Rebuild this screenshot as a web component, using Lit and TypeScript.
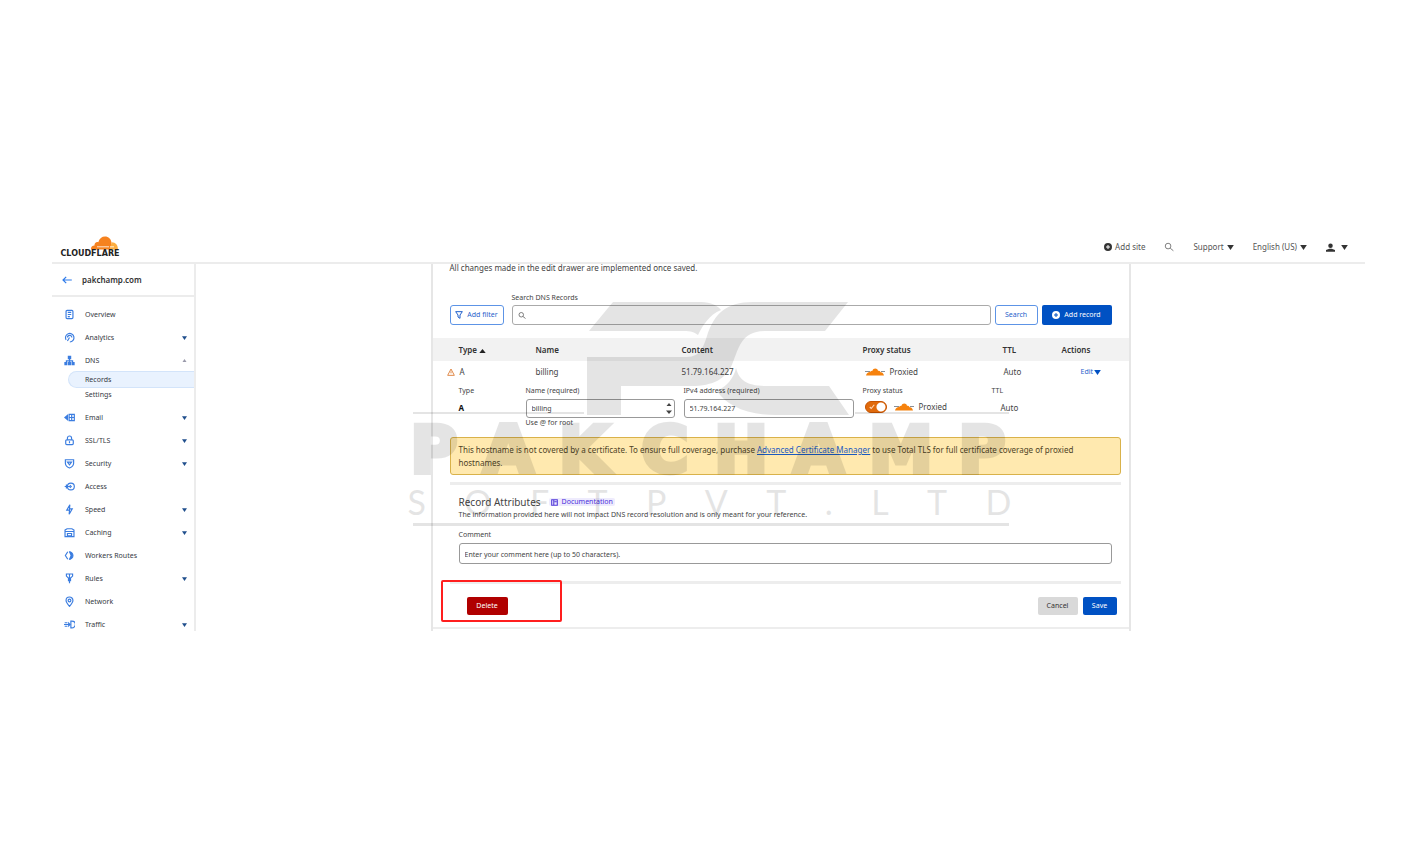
import { LitElement, html, css, svg, nothing } from "lit";
import { customElement } from "lit/decorators.js";
import { classMap } from "lit/directives/class-map.js";

const glyphs: Record<string, unknown> = {
  overview: svg`<rect x="3" y="2" width="10" height="12" rx="1.5"/><path d="M5.5 5h5M5.5 8h5M5.5 11h3"/>`,
  analytics: svg`<path d="M3 11.500a6.200 6.200 0 1 1 5.500 3M5 8a3.200 3.200 0 0 1 6.400 0M8 8l-3 5"/>`,
  dns: svg`<path d="M8 5v5M3.500 11V8.500h9V11"/><path class="solid" d="M5.500 1h5v5h-5zM0.500 10h4.500v5H0.500zM5.800 10h4.500v5H5.800zM11 10h4.500v5H11z"/>`,
  email: svg`<path class="solid" d="M0 8l6-5v10z"/><path d="M7.500 3.500h7.500v9H7.500zM7.500 8h7.500M11.200 3.500v9"/>`,
  lock: svg`<path d="M5 7V4.500a3 3 0 0 1 6 0V7"/><rect x="2.500" y="7" width="11" height="7" rx="1.500"/><path d="M8 9v3"/>`,
  shield: svg`<path d="M2 2.500h12v5c0 3-2.500 5.500-6 7-3.500-1.500-6-4-6-7zM5 6h6L8 10z"/>`,
  access: svg`<circle cx="10" cy="8" r="5"/><path d="M1 8h8M3.500 5v6M8.500 6l2 2-2 2"/>`,
  speed: svg`<path d="M8.500 1L4 9h4l-.5 6L12 7H8z"/>`,
  caching: svg`<path d="M1.500 4.500l3-2h7l3 2V14h-13zM1.500 6.500h13M5 9.500h6V13H5z"/>`,
  workers: svg`<path d="M5.500 2.500L2 8l3.500 5.500"/><path class="solid" d="M7 2a6 6 0 0 1 0 12l2.500-6z"/><path d="M7.500 2.500a5.500 5.500 0 0 1 0 11"/>`,
  rules: svg`<path d="M3.500 1.500h9v3L9 8H7L3.500 4.500zM8 2v13M6.500 8v3h3V8"/>`,
  network: svg`<path d="M8 15C5 11.500 3 9 3 6.500a5 5 0 0 1 10 0C13 9 11 11.500 8 15z"/><circle cx="8" cy="6.500" r="2"/>`,
  traffic: svg`<path d="M0 8h9M1 5.500h4M1 10.500h4"/><path class="solid" d="M6 4l4 4-4 4z"/><path d="M10 3h1.500a5 5 0 0 1 0 10H10z"/>`,
};

interface NavItem {
  label: string;
  icon: string;
  caret?: "down" | "open";
  children?: string[];
}

const nav: NavItem[] = [
  { label: "Overview", icon: "overview" },
  { label: "Analytics", icon: "analytics", caret: "down" },
  { label: "DNS", icon: "dns", caret: "open", children: ["Records", "Settings"] },
  { label: "Email", icon: "email", caret: "down" },
  { label: "SSL/TLS", icon: "lock", caret: "down" },
  { label: "Security", icon: "shield", caret: "down" },
  { label: "Access", icon: "access" },
  { label: "Speed", icon: "speed", caret: "down" },
  { label: "Caching", icon: "caching", caret: "down" },
  { label: "Workers Routes", icon: "workers" },
  { label: "Rules", icon: "rules", caret: "down" },
  { label: "Network", icon: "network" },
  { label: "Traffic", icon: "traffic", caret: "down" },
];

const caret = html`<svg class="caret" viewBox="0 0 8 6" aria-hidden="true"><path d="M0 0h8L4 6z" /></svg>`;
const magnifier = html`<svg class="glyph" viewBox="0 0 16 16" aria-hidden="true">
  <circle cx="6.500" cy="6.500" r="4.500" /><path d="M10 10l5 4" />
</svg>`;
const plusDisc = html`<svg class="disc" viewBox="0 0 16 16" aria-hidden="true">
  <path fill-rule="evenodd" d="M8 0a8 8 0 1 1 0 16A8 8 0 0 1 8 0zM7 4v3H4v2h3v3h2V9h3V7H9V4z" />
</svg>`;
const proxyCloud = html`<svg class="cloud" viewBox="0 0 20 8" aria-hidden="true">
  <path d="M0 3.500h5M16 3.500h4" stroke="#8a8f96" stroke-width="1" />
  <path d="M1 7.500c.5-2 2-3.500 4-3.500C6 3 6.800 2.800 7.500 2.800 8 -.4 12.500-.4 13 2.800c1.500 0 2.200.4 2.500 1.500 2-.2 3 1.300 3.500 3.200z" fill="#f6820d" />
</svg>`;

@customElement("site-header")
export class SiteHeader extends LitElement {
  static styles = css`
    :host { display: flex; align-items: center; box-sizing: border-box; height: 36px; padding: 4px 17px 0 8px; border-bottom: 2px solid #ececec; font-size: 8px; color: #555; }
    .logo { width: 60px; height: 22px; text-decoration: none; color: #222; display: flex; flex-direction: column; align-items: center; }
    .logo svg { width: 30px; height: 14px; margin-left: 28px; flex: none; }
    .word { font: 700 8px/8px "DejaVu Sans", sans-serif; }
    .tools { margin-left: auto; display: flex; align-items: center; gap: 19px; }
    button { all: unset; display: flex; align-items: center; gap: 3px; font-size: 8px; line-height: 10px; cursor: pointer; }
    .caret { width: 7px; height: 5px; fill: #333; }
    .disc { width: 8px; height: 8px; fill: #333; }
    .glyph { width: 10px; height: 10px; fill: none; stroke: #777; stroke-width: 1.5; }
    .person { width: 9px; height: 9px; fill: #333; margin-right: 3px; }
  `;
  render() {
    return html`
      <a class="logo" href="#" aria-label="Cloudflare home">
        <svg viewBox="0 0 30 14" aria-hidden="true">
          <path d="M2 13.500c-.3-2.600 1.300-4 3.500-4C5.300 7 7.500 5.500 9.300 6.300 10.300 2.500 13 .5 16 .5c3.600 0 6 2.500 6.500 6l-1 7z" fill="#f6821f" />
          <path d="M20.500 13.500l2.200-7.200c4 0 6.300 3 6.200 7.200z" fill="#fbad41" />
          <path d="M8 10.800h12M21 10.800h4" stroke="#fff" stroke-width=".8" />
        </svg>
        <span class="word">CLOUDFLARE</span>
      </a>
      <div class="tools">
        <button>${plusDisc}Add site</button>
        <button aria-label="Search">${magnifier}</button>
        <button>Support ${caret}</button>
        <button>English (US) ${caret}</button>
        <button aria-label="Account">
          <svg class="person" viewBox="0 0 12 11" aria-hidden="true"><circle cx="6" cy="3" r="3" /><path d="M0 11V8.800l4.500-1.800h3L12 8.800V11z" /></svg>
          ${caret}
        </button>
      </div>
    `;
  }
}

@customElement("side-nav")
export class SideNav extends LitElement {
  static styles = css`
    :host { display: block; border-right: 2px solid #ececec; font-size: 7px; color: #36393f; }
    .site { display: flex; align-items: center; gap: 10px; height: 31px; padding: 0 10px; border-bottom: 2px solid #ececec; font-size: 8px; font-weight: 600; color: #333; }
    .site svg { width: 10px; height: 8px; fill: none; stroke: #2f7bea; stroke-width: 1.5; }
    ul { list-style: none; margin: 0; padding: 0; }
    .list { padding-top: 6px; }
    .item { display: flex; align-items: center; height: 23px; padding: 0 7px 0 12px; color: inherit; text-decoration: none; }
    .label { margin-left: 10px; flex: 1; }
    .icon { width: 11px; height: 11px; fill: none; stroke: #3b7de0; stroke-width: 1.7; }
    .solid { fill: #3b7de0; stroke: none; }
    .caret { width: 5px; height: 4px; fill: #1f4e8c; }
    .open { fill: #99a; height: 3px; }
    .sub { padding-bottom: 4px; }
    .child { display: block; margin-left: 17px; padding-left: 16px; line-height: 15px; color: inherit; text-decoration: none; border-radius: 8px 0 0 8px; }
    .current { background: #e9f2fe; box-shadow: 0 0 0 1px #d3e4fa; clip-path: inset(-1px 0 -1px -1px); }
  `;
  render() {
    return html`
      <div class="site">
        <svg viewBox="0 0 12 10" aria-hidden="true"><path d="M12 5H1M5 1L1 5l4 4" /></svg>
        <span>pakchamp.com</span>
      </div>
      <ul class="list">
        ${nav.map(
          (n) => html`<li>
            <a class="item" href="#">
              <svg class="icon" viewBox="0 0 16 16" aria-hidden="true">${glyphs[n.icon]}</svg>
              <span class="label">${n.label}</span>
              ${n.caret
                ? html`<svg class=${classMap({ caret: true, open: n.caret === "open" })} viewBox="0 0 8 6" aria-hidden="true"><path d=${n.caret === "open" ? "M0 6h8L4 0z" : "M0 0h8L4 6z"} /></svg>`
                : nothing}
            </a>
            ${n.children
              ? html`<ul class="sub">
                  ${n.children.map((c, i) => html`<li><a class=${classMap({ child: true, current: i === 0 })} href="#">${c}</a></li>`)}
                </ul>`
              : nothing}
          </li>`
        )}
      </ul>
    `;
  }
}

@customElement("brand-watermark")
export class BrandWatermark extends LitElement {
  static styles = css`
    :host { display: block; position: absolute; left: -25px; top: 38px; width: 604px; pointer-events: none; color: #000; opacity: 0.1; }
    .mark { display: block; width: 604px; height: 113px; }
    .name { display: grid; grid-template-columns: 198px 364px; justify-content: space-between; margin: 0 6px 0 3px; font: 700 64px/70px "DejaVu Sans", sans-serif; -webkit-text-stroke: 5px #000; }
    .spread { display: flex; justify-content: space-between; }
    .tag { font: 400 34px/34px Lato, "Open Sans", sans-serif; }
    .rule { height: 3px; margin: 4px 3px 0 5px; background: #000; }
  `;
  private letters(word: string) {
    return [...word].map((c) => html`<span>${c}</span>`);
  }
  render() {
    return html`
      <svg class="mark" viewBox="407 302 604 113" aria-hidden="true">
        <path d="M588 331L612 302H700C710 302 717 306 720 310C708 315 702 325 697 335C692 331 688 331 680 331Z" />
        <path d="M586 357H686C700 357 703 345 706 336C713 314 725 302 752 302H847L824 331H765C740 331 738 348 732 362C726 379 712 386 690 386H620V415H586Z" />
        <path d="M735 368C738 380 746 386 765 386H828L848 415H775C745 415 725 405 716 391C726 386 733 378 735 368Z" />
        <path d="M412 412H583V414H412ZM854 412H1008V414H854Z" />
      </svg>
      <div class="name">
        <div class="spread">${this.letters("PAK")}</div>
        <div class="spread">${this.letters("CHAMP")}</div>
      </div>
      <div class="spread tag">${this.letters("SOFTPVT.LTD")}</div>
      <div class="rule"></div>
    `;
  }
}

@customElement("dns-panel")
export class DnsPanel extends LitElement {
  static styles = css`
    :host { display: block; position: relative; box-sizing: border-box; border: 2px solid #e6e6e6; border-width: 0 2px; font-size: 8px; line-height: 10px; color: #444; background: #fff; }
    * { box-sizing: border-box; }
    p { margin: 0; }
    button { font: inherit; border: 0; border-radius: 2px; padding: 0; cursor: pointer; display: flex; align-items: center; justify-content: center; gap: 4px; }
    input { font: inherit; color: #444; border: 1px solid #999; border-radius: 3px; background: transparent; }
    .intro { padding: 0 17px; line-height: 8px; }
    .search { display: grid; grid-template-columns: 54px 1fr 43px 70px; column-gap: 4px; padding: 19px 17px 0; }
    .search-label { grid-column: 2; margin: 0 0 1px 4px; font-size: 7px; line-height: 13px; }
    .search button { height: 20px; font-size: 7px; }
    .filter { grid-column: 1; }
    .outline { background: #fff; color: #1f5fcb; border: 1px solid #5d94e6; border-radius: 3px; }
    .outline svg { width: 8px; height: 8px; fill: none; stroke: #1f5fcb; stroke-width: 1.5; }
    .primary { background: #0051c3; color: #fff; }
    .disc { width: 8px; height: 8px; fill: #fff; }
    .box { display: flex; align-items: center; margin-left: 4px; border: 1px solid #aaa; border-radius: 3px; padding-left: 5px; }
    .box input { border: 0; flex: 1; height: 18px; padding: 0 4px; outline: none; }
    .glyph { width: 8px; height: 9px; fill: none; stroke: #555; stroke-width: 1.5; }
    table { width: 100%; margin-top: 13px; border-collapse: collapse; table-layout: fixed; text-align: left; }
    th, td { padding: 0; font-weight: 400; }
    th { height: 23px; background: #f2f2f2; font-weight: 600; color: #333; }
    td { height: 21px; }
    .c-icon { width: 26px; } .c-type { width: 77px; } .c-name { width: 146px; } .c-content { width: 181px; }
    .c-proxy { width: 140px; } .c-ttl { width: 59px; }
    .up { width: 7px; height: 4px; fill: #222; }
    .warn { display: block; width: 8px; height: 8px; margin-left: 14px; fill: none; stroke: #e08a4a; stroke-width: 1.5; }
    .cloud { width: 20px; height: 8px; fill: none; flex: none; }
    .status { display: flex; align-items: center; gap: 5px; padding-left: 2px; }
    .inset { padding-left: 1px; }
    .edit { display: inline-flex; gap: 1px; align-items: center; color: #1f5fcb; font-size: 7px; padding-left: 19px; text-decoration: none; }
    .edit .caret { width: 7px; height: 5px; fill: #0051c3; }
    .form { display: grid; grid-template-columns: 67px 149px 179px 1fr 137px; padding: 4px 0 0 26px; }
    .form > div { display: flex; flex-direction: column; }
    .cap { font-size: 7px; line-height: 10px; margin-bottom: 3px; }
    .form input[type="text"] { height: 19px; width: 100%; padding: 0 5px; font-size: 7px; }
    .form .value { line-height: 17px; }
    .strong { color: #111; font-weight: 700; }
    .stepper { position: relative; }
    .stepper svg { position: absolute; right: 2px; top: 3px; width: 8px; height: 13px; fill: #444; }
    .ip, .proxy { margin-left: 9px; }
    .toggle-row { display: flex; align-items: center; gap: 7px; height: 15px; padding-left: 2px; }
    .toggle-row .status { padding: 0; }
    .toggle { appearance: none; width: 22px; height: 12px; margin: 0; border-radius: 6px; border: 1px solid #c75300; background: radial-gradient(circle at 15px 5px, #fff 4px, transparent 5px) #e06a0c; }
    .toggle-row label { position: relative; display: flex; }
    .toggle-row label svg { position: absolute; left: 4px; top: 3px; width: 6px; height: 6px; fill: none; stroke: #ffd9b8; stroke-width: 1.5; }
    .help { font-size: 7px; line-height: 10px; }
    .auto { padding-left: 9px; }
    .alert { margin: 9px 8px 0 17px; padding: 5px 8px; border: 1px solid #d9b24a; border-radius: 3px; background: #ffe9af; line-height: 13px; color: #4e4326; }
    .alert a { color: #1b5ac0; }
    .divider { height: 3px; margin: 7px 8px 0 17px; background: #ededed; }
    .attributes { padding: 11px 17px 0 26px; }
    .title { display: flex; align-items: center; gap: 8px; }
    h2 { margin: 0; font-size: 10px; line-height: 12px; font-weight: 400; }
    .doc { display: flex; align-items: center; gap: 4px; padding: 0 2px; font-size: 7px; line-height: 8px; font-weight: 400; color: #4a30dc; background: #eeebfd; text-decoration: none; border-radius: 2px; }
    .doc svg { width: 7px; height: 7px; fill: none; stroke: #5038d8; stroke-width: 1.5; }
    .note { font-size: 7px; line-height: 13px; }
    .comment-label { display: block; margin-top: 9px; font-size: 7px; line-height: 10px; }
    .comment { display: block; width: 100%; height: 21px; margin-top: 3px; padding: 0 5px; }
    .comment::placeholder { color: #444; font-size: 7px; opacity: 1; }
    .thin { margin-top: 17px; }
    .actions { display: flex; align-items: center; gap: 5px; height: 43px; padding: 0 12px 0 34px; }
    .actions button { height: 18px; font-size: 7px; }
    .delete { width: 41px; background: #b00000; color: #fff; margin-right: auto; }
    .cancel { width: 40px; background: #d9d9d9; color: #333; }
    .save { width: 34px; background: #0051c3; color: #fff; }
    .end { height: 4px; border-top: 2px solid #ededed; }
    .callout { position: absolute; left: 8px; bottom: 9px; width: 121px; height: 42px; border: 2px solid #ff1e1e; border-radius: 2px; pointer-events: none; }
  `;
  render() {
    return html`
      <p class="intro">All changes made in the edit drawer are implemented once saved.</p>
      <div class="search">
        <label class="search-label" for="q">Search DNS Records</label>
        <button class="outline filter"><svg viewBox="0 0 12 12" aria-hidden="true"><path d="M1 1h10L7.500 6v5L4.500 9V6z" /></svg>Add filter</button>
        <div class="box">${magnifier}<input id="q" type="text" /></div>
        <button class="outline">Search</button>
        <button class="primary">${plusDisc}Add record</button>
      </div>
      <table>
        <colgroup><col class="c-icon" /><col class="c-type" /><col class="c-name" /><col class="c-content" /><col class="c-proxy" /><col class="c-ttl" /><col /></colgroup>
        <thead>
          <tr><th></th><th>Type <svg class="up" viewBox="0 0 8 5" aria-hidden="true"><path d="M0 5h8L4 0z" /></svg></th><th>Name</th><th>Content</th><th>Proxy status</th><th>TTL</th><th>Actions</th></tr>
        </thead>
        <tbody>
          <tr>
            <td><svg class="warn" viewBox="0 0 12 12" aria-hidden="true"><path d="M6 1.500L11 11H1zM6 5v3" /></svg></td>
            <td class="inset">A</td><td>billing</td><td>51.79.164.227</td>
            <td><span class="status">${proxyCloud}Proxied</span></td>
            <td class="inset">Auto</td>
            <td><a class="edit" href="#">Edit${caret}</a></td>
          </tr>
        </tbody>
      </table>
      <div class="form">
        <div><span class="cap">Type</span><span class="value strong">A</span></div>
        <div>
          <label class="cap" for="name">Name (required)</label>
          <span class="stepper"><input id="name" type="text" value="billing" /><svg viewBox="0 0 8 13" aria-hidden="true"><path d="M1.500 4L4 1l2.500 3zM1 8.500h6L4 12z" /></svg></span>
          <span class="help">Use @ for root</span>
        </div>
        <div class="ip"><label class="cap" for="ip">IPv4 address (required)</label><input id="ip" type="text" value="51.79.164.227" /></div>
        <div class="proxy">
          <span class="cap">Proxy status</span>
          <div class="toggle-row">
            <label><input class="toggle" type="checkbox" checked aria-label="Proxied" /><svg viewBox="0 0 8 8" aria-hidden="true"><path d="M1 4l2 2 4-5" /></svg></label>
            <span class="status">${proxyCloud}Proxied</span>
          </div>
        </div>
        <div><span class="cap">TTL</span><span class="value auto">Auto</span></div>
      </div>
      <p class="alert">This hostname is not covered by a certificate. To ensure full coverage, purchase <a href="#">Advanced Certificate Manager</a> to use Total TLS for full certificate coverage of proxied hostnames.</p>
      <div class="divider"></div>
      <div class="attributes">
        <div class="title">
          <h2>Record Attributes</h2>
          <a class="doc" href="#"><svg viewBox="0 0 10 10" aria-hidden="true"><path d="M1 1h8v8H1zM4 1v8M5 4h3" /></svg>Documentation</a>
        </div>
        <p class="note">The information provided here will not impact DNS record resolution and is only meant for your reference.</p>
        <label class="comment-label" for="comment">Comment</label>
        <input class="comment" id="comment" type="text" placeholder="Enter your comment here (up to 50 characters)." />
      </div>
      <div class="divider thin"></div>
      <div class="actions">
        <button class="delete">Delete</button>
        <button class="cancel">Cancel</button>
        <button class="save">Save</button>
      </div>
      <div class="end"></div>
      <div class="callout"></div>
      <brand-watermark></brand-watermark>
    `;
  }
}

@customElement("app-root")
export class AppRoot extends LitElement {
  static styles = css`
    :host { display: block; box-sizing: border-box; min-height: 100vh; padding: 228px 54px 0 52px; background: #fff; font-family: "Noto Sans", "Open Sans", sans-serif; }
    .body { display: grid; grid-template-columns: 144px minmax(0, 1fr); }
    .side { contain: size; overflow: hidden; }
    .main { display: flex; justify-content: center; }
    .panel { flex: 0 1 700px; }
  `;
  render() {
    return html`
      <site-header></site-header>
      <div class="body">
        <side-nav class="side"></side-nav>
        <main class="main"><dns-panel class="panel"></dns-panel></main>
      </div>
    `;
  }
}
